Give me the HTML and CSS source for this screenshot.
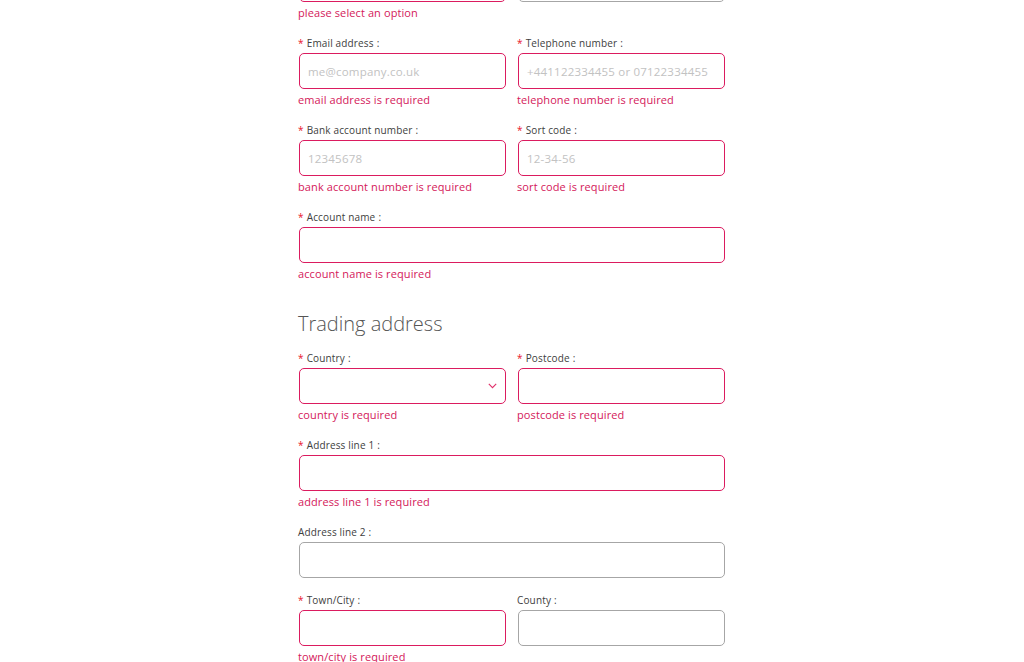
FILE: index.html
```html
<!DOCTYPE html>
<html lang="en">
<head>
<meta charset="utf-8">
<title>Form</title>
<link rel="stylesheet" href="styles.css">
</head>
<body>
<div class="form">
  <div class="row">
    <div class="item top">
      <div class="input error-border"></div>
      <div class="explain">please select an option</div>
    </div>
    <div class="item top">
      <div class="input"></div>
    </div>
  </div>

  <div class="row">
    <div class="item">
      <label class="label"><span class="req">*</span>Email address<span class="colon">:</span></label>
      <input class="input error-border" placeholder="me@company.co.uk">
      <div class="explain">email address is required</div>
    </div>
    <div class="item">
      <label class="label"><span class="req">*</span>Telephone number<span class="colon">:</span></label>
      <input class="input error-border" placeholder="+441122334455 or 07122334455">
      <div class="explain">telephone number is required</div>
    </div>
  </div>

  <div class="row">
    <div class="item">
      <label class="label"><span class="req">*</span>Bank account number<span class="colon">:</span></label>
      <input class="input error-border" placeholder="12345678">
      <div class="explain">bank account number is required</div>
    </div>
    <div class="item">
      <label class="label"><span class="req">*</span>Sort code<span class="colon">:</span></label>
      <input class="input error-border" placeholder="12-34-56">
      <div class="explain">sort code is required</div>
    </div>
  </div>

  <div class="item">
    <label class="label"><span class="req">*</span>Account name<span class="colon">:</span></label>
    <input class="input error-border">
    <div class="explain">account name is required</div>
  </div>

  <h2 class="heading">Trading address</h2>

  <div class="row">
    <div class="item">
      <label class="label"><span class="req">*</span>Country<span class="colon">:</span></label>
      <div class="input select error-border">
        <svg class="chev" width="9" height="6" viewBox="0 0 9 6"><path d="M0.8 0.8 L4.5 4.6 L8.2 0.8" fill="none" stroke="#e0306a" stroke-width="1.1"/></svg>
      </div>
      <div class="explain">country is required</div>
    </div>
    <div class="item">
      <label class="label"><span class="req">*</span>Postcode<span class="colon">:</span></label>
      <input class="input error-border">
      <div class="explain">postcode is required</div>
    </div>
  </div>

  <div class="item">
    <label class="label"><span class="req">*</span>Address line 1<span class="colon">:</span></label>
    <input class="input error-border">
    <div class="explain">address line 1 is required</div>
  </div>

  <div class="item">
    <label class="label">Address line 2<span class="colon">:</span></label>
    <input class="input">
  </div>

  <div class="row">
    <div class="item">
      <label class="label"><span class="req">*</span>Town/City<span class="colon">:</span></label>
      <input class="input error-border">
      <div class="explain">town/city is required</div>
    </div>
    <div class="item">
      <label class="label">County<span class="colon">:</span></label>
      <input class="input">
    </div>
  </div>
</div>
</body>
</html>
```

FILE: styles.css
```css
html, body {
  margin: 0;
  padding: 0;
  background: #ffffff;
}
body {
  font-family: "Open Sans", "Liberation Sans", sans-serif;
  color: #444;
  overflow: hidden;
}
.form {
  width: 428px;
  margin: -34px auto 0;
  display: flex;
  flex-direction: column;
}
.row {
  display: grid;
  grid-template-columns: 1fr 1fr;
  column-gap: 10px;
}
.item {
  display: flex;
  flex-direction: column;
  margin-bottom: 12px;
}
.label {
  height: 20px;
  line-height: 20px;
  font-size: 10px;
  color: #404040;
  letter-spacing: 0.15px;
}
.req {
  color: #e8142b;
  margin-right: 3px;
}
.colon {
  margin-left: 3px;
}
.input {
  box-sizing: border-box;
  height: 36px;
  margin: 0 0 0 1px;
  border: 1px solid #a6a6a6;
  border-radius: 5px;
  background: #fff;
  padding: 0 8px;
  font-family: inherit;
  font-size: 11.5px;
  color: #333;
  outline: none;
}
.item .input {
  width: calc(100% - 2px);
}
.input::placeholder {
  color: #c2c2c2;
  letter-spacing: 0.2px;
}
.error-border {
  border-color: #db1b5f;
}
.select {
  display: flex;
  align-items: center;
  justify-content: flex-end;
  padding-right: 8px;
}
.chev {
  display: block;
}
.explain {
  height: 19px;
  line-height: 22px;
  font-size: 11px;
  color: #d4185a;
  letter-spacing: 0.1px;
}
.heading {
  margin: 16px 0 10px;
  height: 28px;
  line-height: 28px;
  font-size: 20px;
  font-weight: 300;
  color: #555;
}
```
